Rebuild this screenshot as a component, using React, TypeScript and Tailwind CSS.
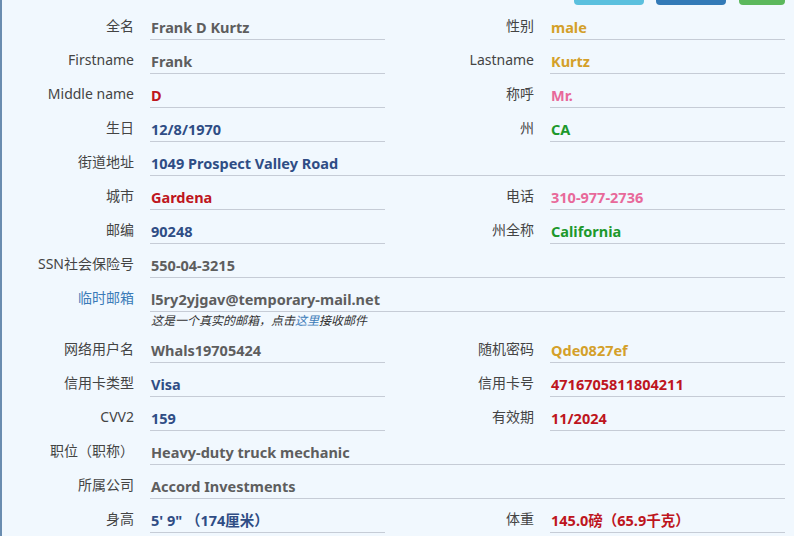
import React from "react";

type C = "gray" | "red" | "blue" | "gold" | "pink" | "green";

const colorClass: Record<C, string> = {
  gray: "text-[#5e5e5e]",
  red: "text-[#be1520]",
  blue: "text-[#2f4d85]",
  gold: "text-[#d4a02a]",
  pink: "text-[#e8699a]",
  green: "text-[#1d982c]",
};

function Field({
  label,
  value,
  color = "gray",
  full = false,
  labelBlue = false,
}: {
  label: string;
  value: string;
  color?: C;
  full?: boolean;
  labelBlue?: boolean;
}) {
  return (
    <div className={full ? "flex w-[800px]" : "flex w-[400px]"}>
      <div
        className={
          "w-[134px] shrink-0 text-right text-[14px] leading-[20px] pt-[10px] " +
          (labelBlue ? "text-[#3b7bb8]" : "text-[#444444]")
        }
      >
        {label}
      </div>
      <div
        className={
          "ml-[16px] mr-[15px] flex-1 border-b border-[#c6ccd6] pt-[11px] pb-[2px] pl-px text-[14.5px] font-bold leading-[20px] whitespace-nowrap " +
          colorClass[color]
        }
      >
        {value}
      </div>
    </div>
  );
}

export default function App() {
  return (
    <div
      className="w-[794px] h-[536px] overflow-hidden bg-[#f1f8fe]"
      style={{ fontFamily: '"Noto Sans", "Noto Sans CJK SC", sans-serif' }}
    >
      <div className="w-[800px] h-[536px] border-l-2 border-[#6a8db0]">
        <div className="flex h-[6px]">
          <div className="ml-[572px] w-[70px] h-[5px] rounded-b-[4px] bg-[#5bc0de]" />
          <div className="ml-[12px] w-[70px] h-[5px] rounded-b-[4px] bg-[#337ab7]" />
          <div className="ml-[13px] w-[46px] h-[5px] rounded-b-[4px] bg-[#5cb85c]" />
        </div>
        <div className="-ml-[2px]">
          <div className="flex">
            <Field label="全名" value="Frank D Kurtz" />
            <Field label="性别" value="male" color="gold" />
          </div>
          <div className="flex">
            <Field label="Firstname" value="Frank" />
            <Field label="Lastname" value="Kurtz" color="gold" />
          </div>
          <div className="flex">
            <Field label="Middle name" value="D" color="red" />
            <Field label="称呼" value="Mr." color="pink" />
          </div>
          <div className="flex">
            <Field label="生日" value="12/8/1970" color="blue" />
            <Field label="州" value="CA" color="green" />
          </div>
          <Field label="街道地址" value="1049 Prospect Valley Road" color="blue" full />
          <div className="flex">
            <Field label="城市" value="Gardena" color="red" />
            <Field label="电话" value="310-977-2736" color="pink" />
          </div>
          <div className="flex">
            <Field label="邮编" value="90248" color="blue" />
            <Field label="州全称" value="California" color="green" />
          </div>
          <Field label="SSN社会保险号" value="550-04-3215" full />
          <Field label="临时邮箱" value="l5ry2yjgav@temporary-mail.net" full labelBlue />
          <div className="ml-[151px] h-[17px] pt-px text-[12px] leading-[16px] italic text-[#333333]">
            这是一个真实的邮箱，点击<span className="text-[#3b7bb8]">这里</span>接收邮件
          </div>
          <div className="flex">
            <Field label="网络用户名" value="Whals19705424" />
            <Field label="随机密码" value="Qde0827ef" color="gold" />
          </div>
          <div className="flex">
            <Field label="信用卡类型" value="Visa" color="blue" />
            <Field label="信用卡号" value="4716705811804211" color="red" />
          </div>
          <div className="flex">
            <Field label="CVV2" value="159" color="blue" />
            <Field label="有效期" value="11/2024" color="red" />
          </div>
          <Field label="职位（职称）" value="Heavy-duty truck mechanic" full />
          <Field label="所属公司" value="Accord Investments" full />
          <div className="flex">
            <Field label="身高" value={"5' 9\" （174厘米）"} color="blue" />
            <Field label="体重" value="145.0磅（65.9千克）" color="red" />
          </div>
        </div>
      </div>
    </div>
  );
}
